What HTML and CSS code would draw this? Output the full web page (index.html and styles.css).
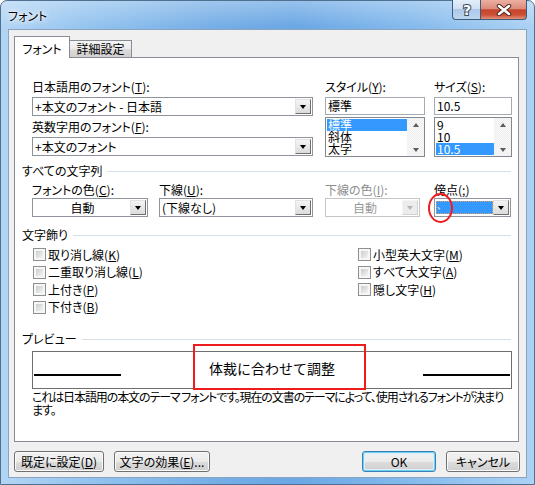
FILE: index.html
```html
<!DOCTYPE html>
<html lang="ja">
<head>
<meta charset="utf-8">
<title>フォント</title>
<link rel="stylesheet" href="styles.css">
</head>
<body>
<div class="window">
  <div class="titlebar">
    <span class="title">フォント</span>
    <div class="caption">
      <span class="cbtn help">
        <svg width="14" height="16" viewBox="0 0 14 16"><text x="7" y="13" text-anchor="middle" class="qmark">?</text></svg>
      </span>
      <span class="cbtn close">
        <svg width="16" height="12" viewBox="0 0 16 12"><path d="M3 2 L13 10 M13 2 L3 10" class="x-out"/><path d="M3 2 L13 10 M13 2 L3 10" class="x-in"/></svg>
      </span>
    </div>
  </div>
  <div class="client">
    <div class="tabs">
      <div class="tab active">フォント</div>
      <div class="tab">詳細設定</div>
    </div>
    <div class="page">
      <div class="fontgrid">
        <div class="col">
          <span class="lbl">日本語用のフォント(<u>T</u>):</span>
          <div class="combo wide"><span class="val">+本文のフォント - 日本語</span><span class="dd"></span></div>
          <span class="lbl lbl2">英数字用のフォント(<u>F</u>):</span>
          <div class="combo wide"><span class="val">+本文のフォント</span><span class="dd"></span></div>
        </div>
        <div class="col">
          <span class="lbl">スタイル(<u>Y</u>):</span>
          <div class="textbox style-w">標準</div>
          <div class="listbox style-w">
            <ul><li class="sel">標準</li><li>斜体</li><li>太字</li></ul>
            <div class="vscroll"><span class="arr up"></span><span class="arr down"></span></div>
          </div>
        </div>
        <div class="col">
          <span class="lbl">サイズ(<u>S</u>):</span>
          <div class="textbox size-w">10.5</div>
          <div class="listbox size-w">
            <ul><li>9</li><li>10</li><li class="sel">10.5</li></ul>
            <div class="vscroll"><span class="arr up"></span><span class="arr down"></span></div>
          </div>
        </div>
      </div>

      <div class="section">すべての文字列</div>
      <div class="attrs">
        <div class="col">
          <span class="lbl">フォントの色(<u>C</u>):</span>
          <div class="combo c1"><span class="val center">自動</span><span class="dd"></span></div>
        </div>
        <div class="col">
          <span class="lbl">下線(<u>U</u>):</span>
          <div class="combo c2"><span class="val">(下線なし)</span><span class="dd"></span></div>
        </div>
        <div class="col">
          <span class="lbl disabled">下線の色(<u>I</u>):</span>
          <div class="combo c3 off"><span class="val center">自動</span><span class="dd"></span></div>
        </div>
        <div class="col">
          <span class="lbl">傍点(<u>;</u>)</span>
          <div class="combo c4 bouten"><span class="selfill"><span class="mark">、</span></span><span class="dd"></span><span class="redcircle"></span></div>
        </div>
      </div>

      <div class="section sec2">文字飾り</div>
      <div class="checks">
        <div class="chk"><span class="cb"></span>取り消し線(<u>K</u>)</div>
        <div class="chk"><span class="cb"></span>二重取り消し線(<u>L</u>)</div>
        <div class="chk"><span class="cb"></span>上付き(<u>P</u>)</div>
        <div class="chk"><span class="cb"></span>下付き(<u>B</u>)</div>
        <div class="chk"><span class="cb"></span>小型英大文字(<u>M</u>)</div>
        <div class="chk"><span class="cb"></span>すべて大文字(<u>A</u>)</div>
        <div class="chk"><span class="cb"></span>隠し文字(<u>H</u>)</div>
      </div>

      <div class="section sec3">プレビュー</div>
      <div class="preview">
        <span class="uline"></span>
        <span class="ptext">体裁に合わせて調整</span>
        <span class="uline"></span>
        <span class="redbox"></span>
      </div>
      <p class="desc"><span class="line1">これは日本語用の本文のテーマ フォントです。現在の文書のテーマによって、使用されるフォントが決まり</span><span class="line2">ます。</span></p>
    </div>
    <div class="buttons">
      <div class="btn b1">既定に設定(<u>D</u>)</div>
      <div class="btn b2">文字の効果(<u>E</u>)...</div>
      <div class="btn b3 default">OK</div>
      <div class="btn b4">キャンセル</div>
    </div>
  </div>
</div>
</body>
</html>
```

FILE: styles.css
```css
* { box-sizing: border-box; }
html, body { margin: 0; padding: 0; }
body {
  width: 535px;
  height: 485px;
  overflow: hidden;
  background: #ffffff;
  font-family: "Noto Sans CJK JP", "Noto Sans", sans-serif;
  font-size: 12px;
  color: #000;
  font-feature-settings: "palt";
}
u { text-decoration: underline; text-underline-offset: 1px; }

.window {
  width: 535px;
  height: 485px;
  border: 1px solid #50708f;
  border-radius: 7px 7px 0 0;
  padding: 0 7px 6px 7px;
  display: flex;
  flex-direction: column;
  background:
    linear-gradient(180deg, rgba(255,255,255,0.30) 0, rgba(255,255,255,0) 26px),
    linear-gradient(90deg, #b3d5f4 0%, #94c4ef 16%, #76aee6 40%, #6aa7e4 55%, #86bbed 78%, #acd2f4 100%);
}

.titlebar {
  height: 28px;
  display: flex;
  align-items: flex-start;
}
.title {
  margin-top: 8px;
  line-height: 14px;
  font-size: 12px;
  text-shadow: 0 0 5px #fff, 0 0 8px #fff, 0 0 2px #fff;
}
.caption {
  margin-left: auto;
  margin-top: -1px;
  display: flex;
}
.cbtn {
  height: 20px;
  border: 1px solid #3e5b7a;
  border-top: none;
  display: flex;
  align-items: center;
  justify-content: center;
}
.help {
  width: 28px;
  border-right: none;
  border-radius: 0 0 0 4px;
  background: linear-gradient(180deg, #e3eefa 0%, #cfe1f3 45%, #adc9e8 50%, #bdd6f0 100%);
}
.close {
  width: 47px;
  border-radius: 0 0 4px 0;
  background: linear-gradient(180deg, #eab0a2 0%, #dc8c7a 45%, #c6432b 52%, #cc4f36 78%, #e3917a 100%);
}
.qmark {
  font-family: "DejaVu Sans", sans-serif;
  font-weight: bold;
  font-size: 14px;
  fill: #ffffff;
  stroke: #3a4a5c;
  stroke-width: 2px;
  paint-order: stroke;
}
.x-out { stroke: #4a2a22; stroke-width: 4.5; fill: none; stroke-linecap: round; }
.x-in { stroke: #ffffff; stroke-width: 2.5; fill: none; stroke-linecap: round; }

.client {
  width: 519px;
  height: 449px;
  border: 1px solid #8aa4bf;
  background: #f0f0f0;
  display: flex;
  flex-direction: column;
}

.tabs {
  display: flex;
  align-items: flex-end;
  margin: 6px 0 0 5px;
  height: 21px;
  position: relative;
  z-index: 2;
}
.tab {
  border: 1px solid #898c95;
  border-bottom: none;
  height: 17px;
  width: 63px;
  margin-left: -1px;
  line-height: 16px;
  text-align: center;
  background: linear-gradient(180deg, #f3f3f3 0%, #ebebeb 50%, #dddddd 50%, #cfcfcf 100%);
}
.tab.active {
  width: 56px;
  height: 22px;
  margin-left: 0;
  margin-bottom: -1px;
  padding-top: 4px;
  background: #ffffff;
  position: relative;
  z-index: 3;
}

.page {
  margin-left: 5px;
  width: 505px;
  height: 385px;
  border: 1px solid #898c95;
  background: #ffffff;
  padding: 22px 7px 0 7px;
  position: relative;
  z-index: 1;
}

.lbl {
  display: block;
  height: 14px;
  line-height: 14px;
  margin-bottom: 3px;
  white-space: nowrap;
}
.lbl.disabled { color: #8d8d8d; }
.lbl2 { margin-top: 4px; }

.fontgrid {
  display: grid;
  grid-template-columns: 293px 109px 78px;
  margin-left: 10px;
}
.col { display: flex; flex-direction: column; align-items: flex-start; }

.combo {
  height: 19px;
  border: 1px solid #8f949c;
  background: #ffffff;
  display: flex;
  align-items: center;
  position: relative;
}
.combo .val {
  flex: 1;
  padding-left: 2px;
  line-height: 15px;
  white-space: nowrap;
  overflow: hidden;
}
.combo .val.center { text-align: center; }
.combo.wide { width: 281px; }
.dd {
  width: 16px;
  height: 15px;
  margin-right: 1px;
  border: 1px solid;
  border-color: #e2e2e2 #6f6f6f #6f6f6f #e2e2e2;
  background: linear-gradient(180deg, #f4f4f4, #dcdcdc);
  display: flex;
  align-items: center;
  justify-content: center;
}
.dd::after {
  content: "";
  width: 0;
  height: 0;
  border-left: 3.5px solid transparent;
  border-right: 3.5px solid transparent;
  border-top: 4px solid #000;
}
.combo.off { border-color: #c6c6c6; color: #9a9a9a; }
.combo.off .dd {
  border-color: #f4f4f4 #d2d2d2 #d2d2d2 #f4f4f4;
  background: #ececec;
}
.combo.off .dd::after { border-top-color: #b4b4b4; }

.textbox {
  height: 18px;
  border: 1px solid #a6abb3;
  background: #fff;
  line-height: 16px;
  padding-left: 2px;
  white-space: nowrap;
}
.style-w { width: 100px; }
.size-w { width: 78px; }

.listbox {
  margin-top: 2px;
  height: 40px;
  border: 1px solid #828790;
  background: #fff;
  display: flex;
}
.listbox ul {
  margin: 0;
  padding: 1px 0 0 0;
  list-style: none;
  flex: 1;
}
.listbox li {
  height: 12px;
  line-height: 12px;
  font-size: 12px;
  padding-left: 1px;
  margin-left: 1px;
  white-space: nowrap;
}
.listbox li.sel { background: #3399ff; color: #fff; }
.vscroll {
  width: 17px;
  background: repeating-conic-gradient(#ececec 0 25%, #fbfbfb 0 50%) 0 0 / 2px 2px;
  display: flex;
  flex-direction: column;
  justify-content: space-between;
  align-items: center;
  padding: 5px 0 4px 0;
}
.arr { width: 0; height: 0; border-left: 3.5px solid transparent; border-right: 3.5px solid transparent; }
.arr.up { border-bottom: 4px solid #5c5c5c; }
.arr.down { border-top: 4px solid #5c5c5c; }

.section {
  display: flex;
  align-items: center;
  height: 14px;
  line-height: 14px;
  margin-top: 7px;
  white-space: nowrap;
}
.section::after {
  content: "";
  flex: 1;
  height: 1px;
  background: #d5dfe5;
  margin-left: 5px;
  margin-top: 1px;
}
.sec2 { margin-top: 11px; }
.sec3 { margin-top: 16px; }

.attrs {
  display: grid;
  grid-template-columns: 127px 166px 109px 77px;
  margin: 5px 0 0 10px;
}
.attrs .lbl { margin-bottom: 1px; }
.c1 { width: 116px; }
.c2 { width: 154px; }
.c3 { width: 95px; }
.c4 { width: 77px; }
.selfill {
  flex: 1;
  height: 13px;
  margin: 0 0 0 1px;
  background: #3399ff;
  border: 1px dotted #e8a060;
  position: relative;
}
.selfill .mark {
  position: absolute;
  left: 0;
  top: -2px;
  color: #fff;
  font-size: 9px;
  line-height: 12px;
}
.redcircle {
  position: absolute;
  left: -7px;
  top: -6px;
  width: 25px;
  height: 30px;
  border: 2px solid #ee1c1c;
  border-radius: 50%;
}

.checks {
  display: grid;
  grid-auto-flow: column;
  grid-template-rows: repeat(4, 17.5px);
  grid-template-columns: 325px 1fr;
  margin: 4px 0 0 11px;
}
.chk {
  display: flex;
  align-items: center;
  white-space: nowrap;
  line-height: 14px;
}
.cb {
  width: 13px;
  height: 13px;
  margin-right: 2px;
  border: 1px solid #8e8f8f;
  padding: 2px;
  background: linear-gradient(135deg, #c9ccd1, #f4f4f4) content-box, #f6f6f6;
  flex: none;
}

.preview {
  position: relative;
  margin: 5px 0 0 10px;
  width: 480px;
  height: 38px;
  border: 1px solid #6e6e6e;
  display: flex;
  justify-content: space-between;
  align-items: flex-start;
  padding: 0 1px;
}
.uline {
  width: 87px;
  height: 2px;
  background: #000;
  margin-top: 22px;
}
.ptext {
  font-size: 14px;
  line-height: 16px;
  margin-top: 8px;
  font-feature-settings: normal;
}
.redbox {
  position: absolute;
  left: 160px;
  top: -8px;
  width: 173px;
  height: 46px;
  border: 2px solid #ee1c1c;
}

.desc {
  margin: 1px 0 0 10px;
  line-height: 13px;
  letter-spacing: -1.1px;
}
.desc .line1, .desc .line2 { display: block; white-space: nowrap; }

.buttons {
  display: flex;
  margin-top: 9px;
  padding: 0 6px 0 5px;
}
.btn {
  height: 21px;
  border: 1px solid #707070;
  border-radius: 3px;
  background: linear-gradient(180deg, #f2f2f2 0%, #ebebeb 50%, #dddddd 50%, #cfcfcf 100%);
  box-shadow: inset 0 0 0 1px #fbfbfb;
  display: flex;
  align-items: center;
  justify-content: center;
  line-height: 14px;
  white-space: nowrap;
}
.b1 { width: 90px; }
.b2 { width: 96px; margin-left: 10px; }
.b3 { width: 74px; margin-left: auto; }
.b4 { width: 74px; margin-left: 10px; }
.btn.default {
  border-color: #3c7fb1;
  box-shadow: inset 0 0 0 1px #6fd0f5, inset 0 0 0 2px #d8f1fb;
}
```
